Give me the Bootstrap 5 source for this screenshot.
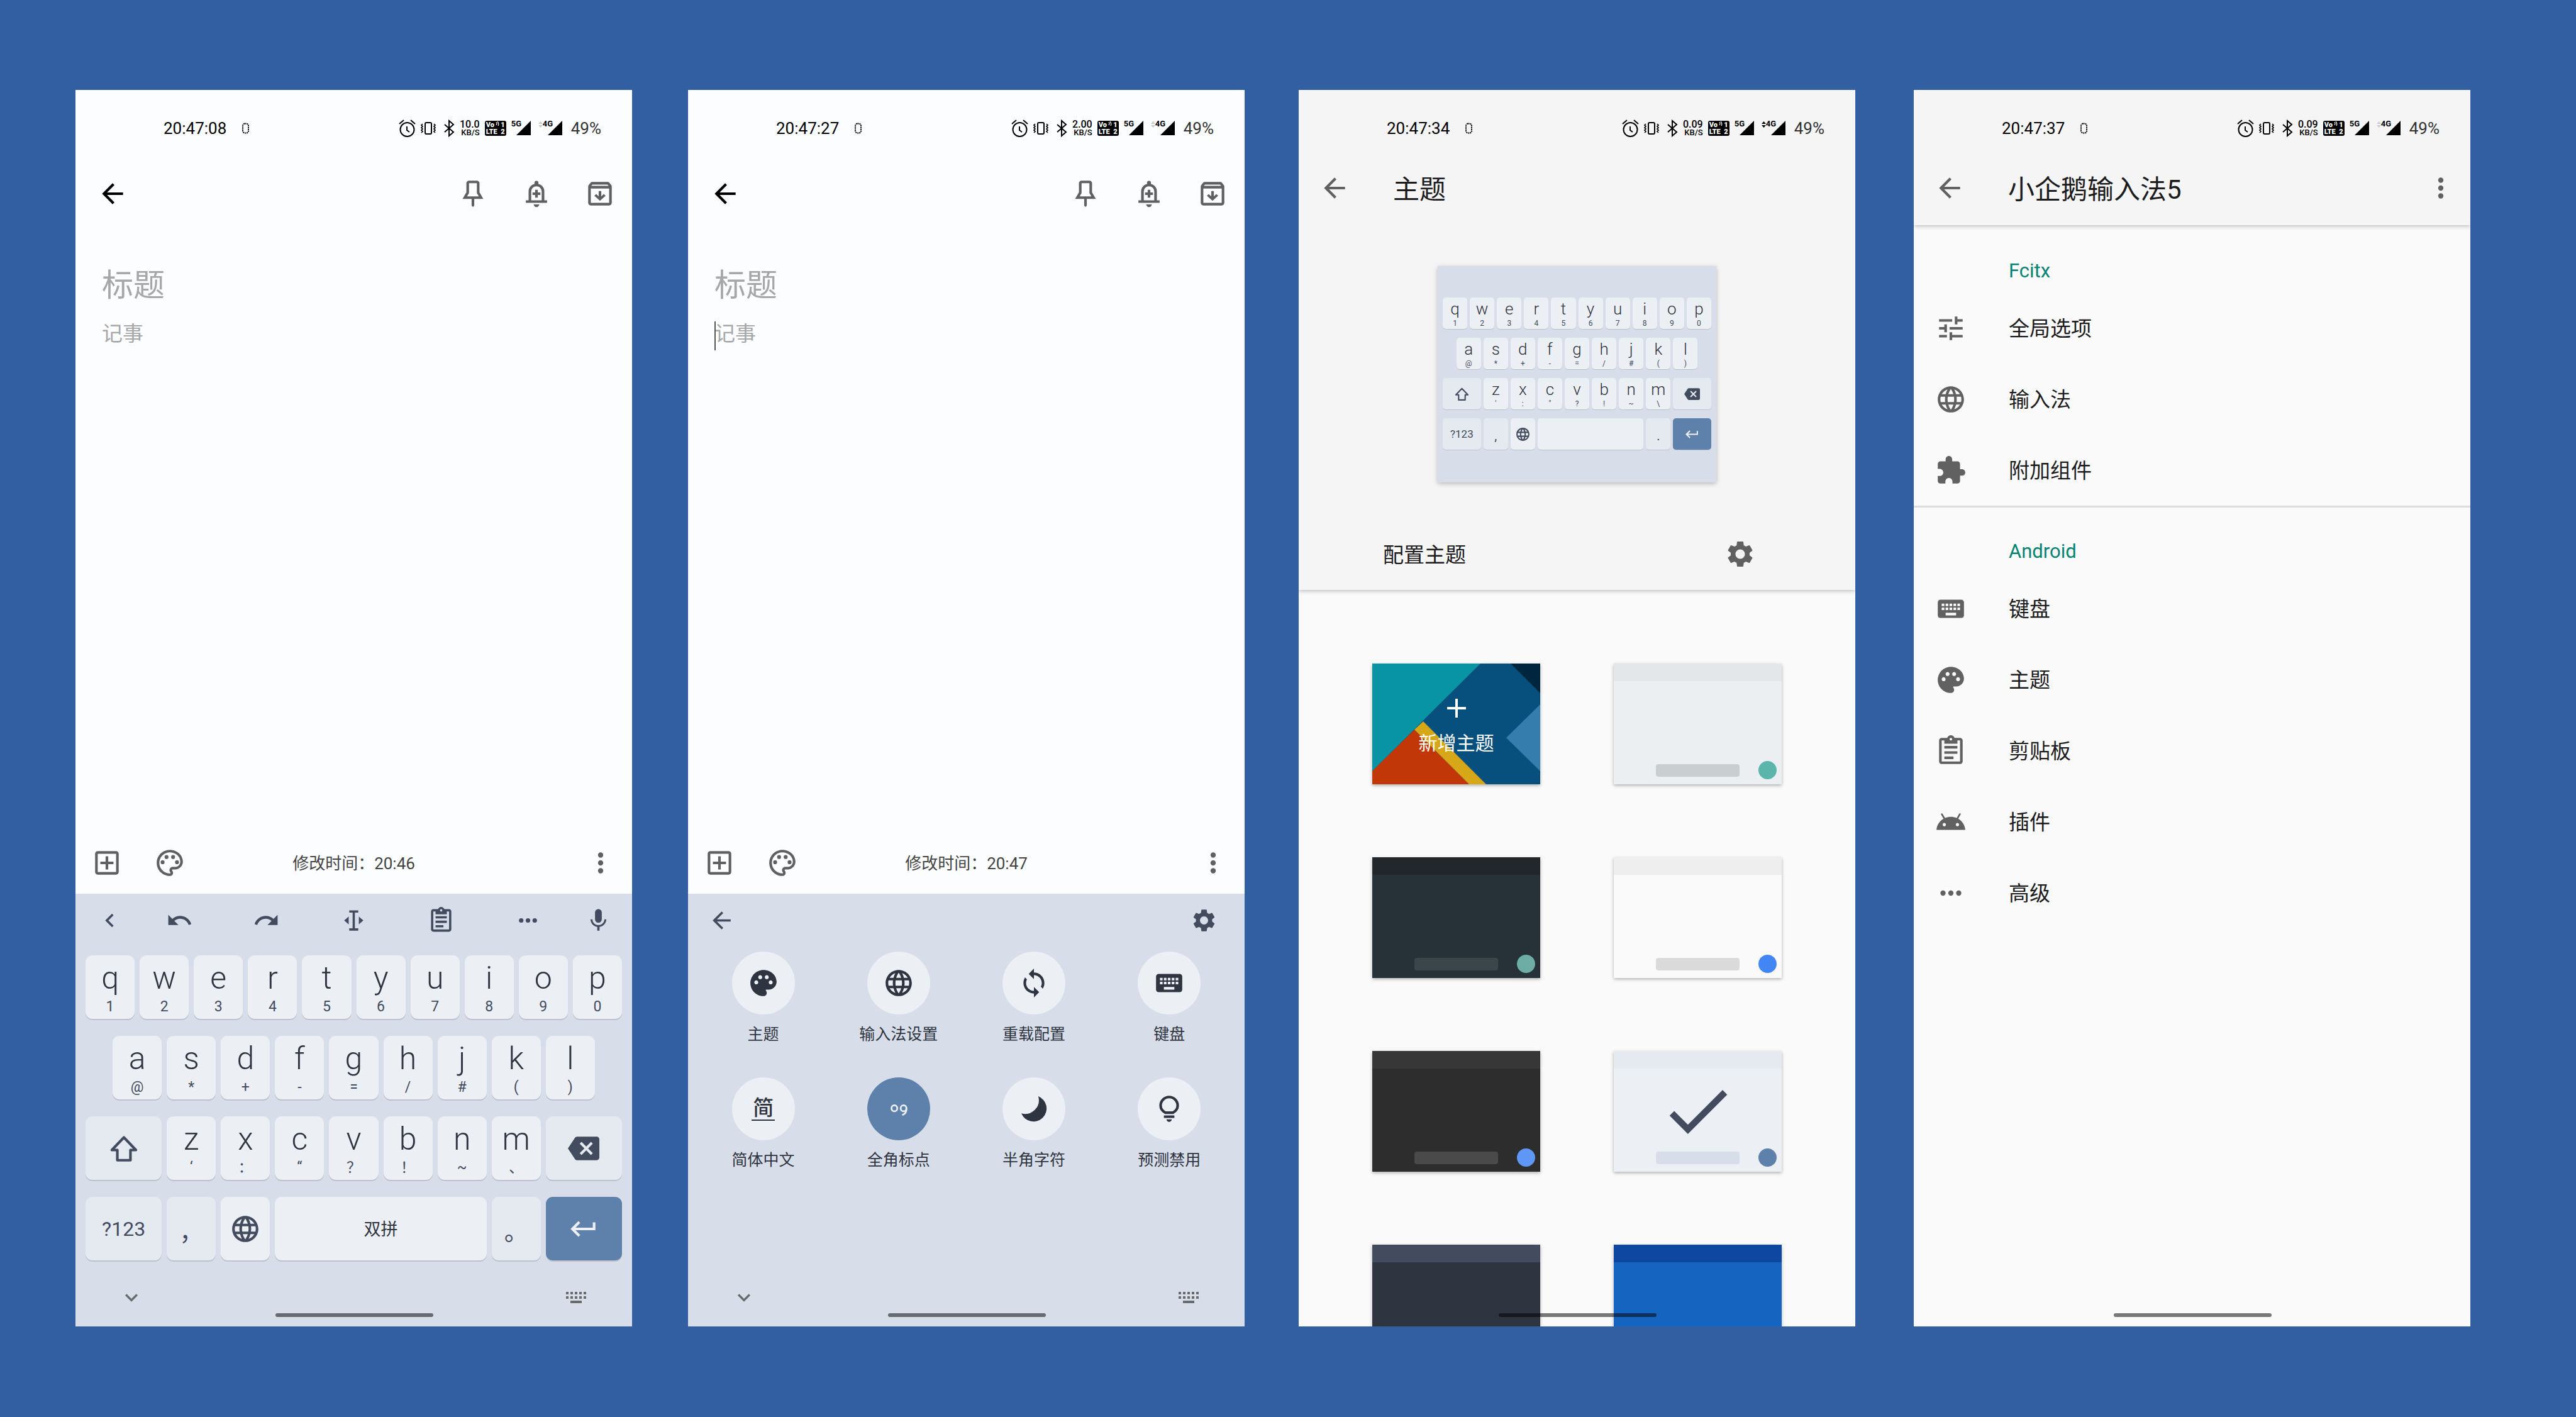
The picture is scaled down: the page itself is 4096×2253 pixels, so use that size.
<!DOCTYPE html>
<html lang="zh-CN">
<head>
<meta charset="utf-8">
<meta name="viewport" content="width=device-width, initial-scale=1">
<title>小企鹅输入法5</title>
<link href="https://cdn.jsdelivr.net/npm/bootstrap@5.3.0/dist/css/bootstrap.min.css" rel="stylesheet">
<style>
:root{--ink:#1c1c1e;--grey:#616161;--kb-bg:#d8dee9;--kb-key:#eceff4;--kb-alt:#e5e9f0;--kb-ink:#2e3440;--kb-sub:#434c5e;--kb-accent:#5e81ac}
body{background:#315fa2;font-family:Roboto,"Noto Sans CJK SC",sans-serif;color:var(--ink)}
svg{display:block;fill:currentColor;flex:none}
.btn{--bs-btn-padding-x:0;--bs-btn-padding-y:0;--bs-btn-border-width:0;--bs-btn-color:inherit;color:inherit;border-radius:0}
.i40{width:40px;height:40px}
.i43{width:43px;height:43px}
.i50{width:50px;height:50px}
/* stage with four phone screens */
.stage{height:100vh;padding:143px 168px 144px 120px}
.screen{flex:1 1 0;min-width:0;background:#fcfdff;overflow:hidden}
.gap-s{margin-left:86px}.gap-m{margin-left:89px}.gap-l{margin-left:93px}
.homebar{position:absolute;left:50%;bottom:15px;width:251px;height:6px;margin-left:-125px;border-radius:3px;background:rgba(0,0,0,.52)}
/* status bar */
.status{height:97px;padding:24px 49px 0 140px;font-size:26px;line-height:30px;color:#000}
.clockdot{margin-left:24px}
.stat-icons{gap:8px}
.rate{width:32px;font-weight:500;font-size:16px;line-height:13px;text-align:right}
.rate span{display:block;font-size:13px}
.volte{width:34px;height:24px;border-radius:3px;background:#000;color:#fff;font-weight:900;font-size:11px;line-height:11px;padding:1px 2px}
.sig{height:24px;font-weight:700;font-size:13px;line-height:10px}
.sig .tri{margin-left:-8px}
.sig5{width:35px}.sig4{width:44px}
.pct{color:#333}
/* note editor */
.note-top{height:136px;padding:0 26px 0 34px;color:#5f6062}
.note-top .actions{gap:51px}
.note-main{padding:48px 42px 0}
.plain{border:0;background:none;outline:0;padding:0;width:100%;resize:none;display:block;border-radius:0}
.plain::placeholder{color:#a6a7a9;opacity:1}
.note-title{font-size:50px;line-height:60px;height:60px}
.note-text{font-size:33px;line-height:40px;overflow:hidden}
.note-body{margin-top:27px}
.caret{position:absolute;left:0;top:0;width:2px;height:46px;background:#555}
.note-foot{height:99px;padding:0 25px;color:#5f6062}
.note-foot .actions{gap:50px}
.stamp{font-size:26px;color:#444;padding-top:3px}
/* keyboard */
.kb{background:var(--kb-bg);color:var(--kb-sub)}
.kb-bar{height:84px;padding:0 12px}
.kb-bar .side{width:84px;flex:none}
.kb-bar .btn{display:flex;justify-content:center}
.kb-rows{padding:0 12px;--fs:50px;--lh:52px;--pt:10px;--sfs:23px;--slh:24px;--smt:8px;--h:101px;--mx:4px;--mt:14px;--mb:13px;--r:11px;--sh:2px;--fn:32px;--pn:38px;--ic:50px}
.kb-key{flex:0 0 calc(10% - 2*var(--mx));margin:var(--mt) var(--mx) var(--mb);height:var(--h);background:var(--kb-key);border-radius:var(--r);box-shadow:0 var(--sh) 0 #bdc3ce;color:var(--kb-ink);font-size:var(--fs);font-weight:300;line-height:var(--lh);padding:var(--pt) 0 0;display:flex;flex-direction:column;align-items:center}
.kb-key span{font-size:var(--sfs);font-weight:400;line-height:var(--slh);margin-top:var(--smt);color:var(--kb-sub)}
.kb-key svg{width:var(--ic);height:var(--ic)}
.k-c{justify-content:center;padding:0;font-weight:400;color:var(--kb-sub)}
.k-wide{flex-basis:calc(15% - 2*var(--mx))}
.k-space{flex-basis:calc(40% - 2*var(--mx));font-size:27px;color:var(--kb-ink);padding-top:3px}
.k-alt{background:var(--kb-alt)}
.k-fn{font-size:var(--fn)}
.k-pn{font-size:var(--pn);padding-top:var(--pt)}
.k-go,.k-go:hover{background:var(--kb-accent);color:#eceff4}
.kb-nav{height:92px;padding:0 69px;color:#686a6c}
/* tool panel */
.panel-bar{height:84px;padding:0 43px 0 32px}
.panel{min-height:512px;padding:8px 12px 0;color:var(--kb-ink)}
.tool{height:200px;font-size:25px;line-height:36px;display:flex;flex-direction:column;align-items:center;justify-content:flex-start}
.disc{width:100px;height:100px;border-radius:50%;background:var(--kb-key);margin-bottom:14px;display:flex;align-items:center;justify-content:center}
.disc-on{background:var(--kb-accent);color:#eceff4}
.jian{font-size:33px;line-height:36px;font-weight:500;border-bottom:2px solid;padding:0 2px}
/* settings screens */
.appbar{background:#f5f5f5;position:relative;z-index:1;box-shadow:0 1px 7px rgba(0,0,0,.3)}
.appbar-row{height:118px;padding:0 22px 0 32px;color:var(--grey)}
.app-title{font-size:42px;line-height:60px;font-weight:400;color:var(--ink);padding-top:5px;margin:0 auto 0 68px}
.flat{background:#fafafa}
.preview{width:443px;height:344px;margin:65px auto 0;padding-top:43px;background:var(--kb-bg);box-shadow:0 2px 7px rgba(0,0,0,.25)}
.preview .kb-rows{padding:0 6px;--fs:26px;--lh:26px;--pt:5px;--sfs:12px;--slh:12px;--smt:4px;--h:50px;--mx:2px;--mt:7px;--mb:7px;--r:5px;--sh:1px;--fn:17px;--pn:20px;--ic:25px}
.config{height:114px;margin-top:57px;padding:0 158px 0 134px;font-size:33px}
.config span,.pref span{padding-top:3px}
.themes{flex:1 1 0;min-height:0;overflow:hidden;display:grid;grid-template-columns:267px 267px;justify-content:space-evenly;align-content:start;row-gap:116px;padding-top:117px}
.theme{position:relative;height:192px;display:flex;flex-direction:column;background:var(--b);box-shadow:0 2px 5px rgba(0,0,0,.3)}
.theme i{display:block}
.t-head{height:28px;width:100%;background:var(--h)}
.t-foot{margin-top:auto;width:100%;padding:0 8px 8px 37px}
.t-bar{width:133px;height:20px;border-radius:4px;background:var(--s);margin-left:30px}
.t-dot{width:29px;height:29px;border-radius:50%;background:var(--a)}
.tick{position:absolute;left:71px;top:33px;width:125px;height:125px;color:#434c5e}
.art{position:absolute;left:0;top:0;width:100%;height:100%}
.new{position:relative;color:#fff;font-size:30px;line-height:40px;padding-top:56px;width:100%}
.new svg{margin:0 auto 21px}
.th-aqua{--h:#e3e7e9;--b:#ebeff1;--s:#c9ced1;--a:#5bb5aa}
.th-deep{--h:#21272b;--b:#263238;--s:#3b464b;--a:#6eada6}
.th-light{--h:#eee;--b:#fafafa;--s:#dadada;--a:#4285f4}
.th-dark{--h:#373737;--b:#2d2d2d;--s:#4a4a4a;--a:#5e97f6}
.th-nord{--h:#e5e9f0;--b:#eceff4;--s:#d8dee9;--a:#5e81ac}
.th-nordk{--h:#434c5e;--b:#2e3440;--s:#4c566a;--a:#5e81ac}
.th-blue{--h:#0d47a1;--b:#1565c0;--s:#3f7fd0;--a:#90caf9}
.prefs{padding-top:3px}
.group{height:104px;padding:50px 0 0 151px;font-size:31px;line-height:40px;color:#078373;margin:0;font-weight:400}
.pref{height:113px;padding-left:34px;gap:67px;font-size:33px;color:var(--grey);text-decoration:none}
.pref span{color:var(--ink)}
.rule{height:3px;background:#dcdcdc}
</style>
<script src="https://cdn.jsdelivr.net/npm/bootstrap@5.3.0/dist/js/bootstrap.bundle.min.js"></script>
</head>
<body>
<svg width="0" height="0" class="position-absolute" aria-hidden="true"><defs>
<symbol id="back" viewBox="0 0 24 24"><path d="M20 11H7.83l5.59-5.59L12 4l-8 8 8 8 1.41-1.41L7.83 13H20v-2z"/></symbol>
<symbol id="pin" viewBox="0 0 24 24"><path d="M9 3h6a1 1 0 0 1 1 1v7.2l2.2 3.8H5.8L8 11.200V4a1 1 0 0 1 1-1z" fill="none" stroke="currentColor" stroke-width="2"/><path d="M11 15.500h2v5.600l-1 1-1-1z"/></symbol>
<symbol id="bell" viewBox="0 0 24 24"><path d="M7 17.500V10.300a5 5 0 0 1 10 0v7.200" fill="none" stroke="currentColor" stroke-width="2"/><rect x="10.500" y="2.200" width="3" height="3.500" rx="1.500"/><path d="M3.900 17h16.200v2H3.900zM9.900 20.200h4.200a2.100 2 0 0 1-4.200 0zM11 9h2v2h2v2h-2v2h-2v-2H9v-2h2z"/></symbol>
<symbol id="archive" viewBox="0 0 24 24"><path fill-rule="evenodd" d="M20.540 5.230l-1.390-1.680C18.880 3.210 18.470 3 18 3H6c-.47 0-.88.21-1.160.55L3.460 5.230C3.170 5.570 3 6.020 3 6.500V19c0 1.100.9 2 2 2h14c1.100 0 2-.9 2-2V6.500c0-.48-.17-.93-.46-1.270zM6.240 5h11.520l.83 1H5.420l.82-1zM5 19V8h14v11H5z"/><path d="M12 17.400L7.700 13.500 9.100 12.200 11 14V10h2v4l1.900-1.800 1.400 1.300z"/></symbol>
<symbol id="addbox" viewBox="0 0 24 24"><path d="M19 3H5c-1.110 0-2 .9-2 2v14c0 1.100.89 2 2 2h14c1.100 0 2-.9 2-2V5c0-1.100-.9-2-2-2zm0 16H5V5h14v14zm-8-2h2v-4h4v-2h-4V7h-2v4H7v2h4z"/></symbol>
<symbol id="palo" viewBox="0 0 24 24"><path d="M12 22C6.490 22 2 17.510 2 12S6.490 2 12 2s10 4.040 10 9c0 3.310-2.690 6-6 6h-1.770c-.28 0-.5.22-.5.5 0 .12.05.23.13.33.41.47.64 1.060.64 1.670 0 1.380-1.120 2.500-2.500 2.500zm0-18c-4.410 0-8 3.590-8 8s3.590 8 8 8c.28 0 .5-.22.5-.5 0-.16-.08-.28-.14-.35-.41-.46-.63-1.050-.63-1.650 0-1.380 1.120-2.500 2.500-2.500H16c2.210 0 4-1.790 4-4 0-3.860-3.590-7-8-7z"/><circle cx="6.500" cy="11.500" r="1.500"/><circle cx="9.500" cy="7.500" r="1.500"/><circle cx="14.500" cy="7.500" r="1.500"/><circle cx="17.500" cy="11.500" r="1.500"/></symbol>
<symbol id="pal" viewBox="0 0 24 24"><path d="M12 2C6.490 2 2 6.490 2 12s4.490 10 10 10c1.380 0 2.500-1.120 2.500-2.500 0-.61-.23-1.200-.64-1.670-.08-.1-.13-.21-.13-.33 0-.28.22-.5.5-.5H16c3.310 0 6-2.690 6-6 0-4.960-4.490-9-10-9zm5.500 11c-.83 0-1.500-.67-1.500-1.500s.67-1.500 1.500-1.500 1.500.67 1.500 1.500-.67 1.500-1.500 1.500zm-3-4c-.83 0-1.500-.67-1.500-1.500S13.670 6 14.500 6s1.500.67 1.500 1.500S15.330 9 14.500 9zM5 11.500c0-.83.67-1.500 1.500-1.500s1.500.67 1.500 1.500S7.330 13 6.500 13 5 12.330 5 11.500zm6-4c0 .83-.67 1.500-1.500 1.500S8 8.330 8 7.500 8.670 6 9.500 6s1.500.67 1.500 1.500z"/></symbol>
<symbol id="vdots" viewBox="0 0 24 24"><circle cx="12" cy="6" r="2"/><circle cx="12" cy="12" r="2"/><circle cx="12" cy="18" r="2"/></symbol>
<symbol id="hdots" viewBox="0 0 24 24"><circle cx="6" cy="12" r="2"/><circle cx="12" cy="12" r="2"/><circle cx="18" cy="12" r="2"/></symbol>
<symbol id="chevl" viewBox="0 0 24 24"><path d="M15.410 7.410L14 6l-6 6 6 6 1.410-1.410L10.830 12z"/></symbol>
<symbol id="chevd" viewBox="0 0 24 24"><path d="M16.590 8.590L12 13.170 7.410 8.590 6 10l6 6 6-6z"/></symbol>
<symbol id="undo" viewBox="0 0 24 24"><path d="M12.500 8c-2.650 0-5.050.99-6.900 2.600L2 7v9h9l-3.620-3.620c1.390-1.160 3.160-1.880 5.120-1.880 3.540 0 6.550 2.310 7.600 5.500l2.370-.78C21.080 11.030 17.150 8 12.500 8z"/></symbol>
<symbol id="redo" viewBox="0 0 24 24"><path d="M18.400 10.600C16.550 8.990 14.150 8 11.500 8c-4.650 0-8.580 3.030-9.960 7.220L3.900 16c1.050-3.190 4.050-5.500 7.600-5.500 1.950 0 3.730.72 5.120 1.880L13 16h9V7l-3.600 3.600z"/></symbol>
<symbol id="ibeam" viewBox="0 0 24 24"><path d="M8 3h8v2h-3v14h3v2H8v-2h3V5H8zM7.500 8.500v7L3.500 12zM16.500 8.500v7l4-3.500z"/></symbol>
<symbol id="clip" viewBox="0 0 24 24"><path d="M19 2h-4.180C14.400.84 13.300 0 12 0c-1.300 0-2.400.84-2.820 2H5c-1.100 0-2 .9-2 2v16c0 1.100.9 2 2 2h14c1.100 0 2-.9 2-2V4c0-1.100-.9-2-2-2zm-7 0c.55 0 1 .45 1 1s-.45 1-1 1-1-.45-1-1 .45-1 1-1zm7 18H5V4h2v2.500h10V4h2v16z"/><path d="M7 8.200h10v2H7zM7 12.200h10v2H7zM7 16.200h7v2H7z"/></symbol>
<symbol id="mic" viewBox="0 0 24 24"><path d="M12 14c1.660 0 2.990-1.340 2.990-3L15 5c0-1.660-1.340-3-3-3S9 3.340 9 5v6c0 1.660 1.340 3 3 3zm5.300-3c0 3-2.540 5.100-5.300 5.100S6.700 14 6.700 11H5c0 3.410 2.720 6.230 6 6.720V21h2v-3.280c3.280-.48 6-3.300 6-6.720h-1.700z"/></symbol>
<symbol id="gear" viewBox="0 0 24 24"><path d="M19.140 12.940c.04-.3.06-.61.06-.94 0-.32-.02-.64-.07-.94l2.030-1.580c.18-.14.23-.41.12-.61l-1.920-3.320c-.12-.22-.37-.29-.59-.22l-2.390.96c-.5-.38-1.030-.7-1.620-.94l-.36-2.540c-.04-.24-.24-.41-.48-.41h-3.840c-.24 0-.43.17-.47.41l-.36 2.540c-.59.24-1.130.57-1.620.94l-2.390-.96c-.22-.08-.47 0-.59.22L2.740 8.870c-.12.21-.08.47.12.61l2.030 1.580c-.05.3-.09.63-.09.94s.02.64.07.94l-2.030 1.580c-.18.14-.23.41-.12.61l1.920 3.320c.12.22.37.29.59.22l2.390-.96c.5.38 1.030.7 1.620.94l.36 2.540c.05.24.24.41.48.41h3.840c.24 0 .44-.17.47-.41l.36-2.540c.59-.24 1.130-.56 1.620-.94l2.390.96c.22.08.47 0 .59-.22l1.920-3.320c.12-.22.07-.47-.12-.61l-2.010-1.580zM12 15.600c-1.980 0-3.600-1.620-3.600-3.600s1.620-3.600 3.600-3.600 3.600 1.620 3.600 3.600-1.620 3.600-3.600 3.600z"/></symbol>
<symbol id="globe" viewBox="0 0 24 24"><path d="M11.990 2C6.470 2 2 6.480 2 12s4.470 10 9.990 10C17.520 22 22 17.520 22 12S17.520 2 11.990 2zm6.930 6h-2.950c-.32-1.250-.78-2.450-1.380-3.560 1.840.63 3.370 1.910 4.330 3.560zM12 4.040c.83 1.200 1.480 2.530 1.910 3.960h-3.820c.43-1.430 1.080-2.760 1.910-3.960zM4.260 14C4.100 13.360 4 12.690 4 12s.1-1.360.26-2h3.380c-.08.66-.14 1.320-.14 2 0 .68.06 1.340.14 2H4.260zm.82 2h2.950c.32 1.250.78 2.450 1.380 3.560-1.840-.63-3.370-1.900-4.330-3.560zm2.950-8H5.080c.96-1.660 2.490-2.930 4.330-3.560C8.810 5.550 8.350 6.750 8.030 8zM12 19.960c-.83-1.200-1.480-2.530-1.910-3.960h3.820c-.43 1.430-1.080 2.760-1.910 3.960zM14.340 14H9.660c-.09-.66-.16-1.320-.16-2 0-.68.07-1.350.16-2h4.680c.09.65.16 1.320.16 2 0 .68-.07 1.340-.16 2zm.25 5.560c.6-1.110 1.060-2.310 1.380-3.560h2.950c-.96 1.650-2.490 2.930-4.330 3.560zM16.360 14c.08-.66.14-1.320.14-2 0-.68-.06-1.340-.14-2h3.380c.16.64.26 1.310.26 2s-.1 1.360-.26 2h-3.380z"/></symbol>
<symbol id="keyb" viewBox="0 0 24 24"><path d="M20 5H4c-1.100 0-1.990.9-1.990 2L2 17c0 1.100.9 2 2 2h16c1.100 0 2-.9 2-2V7c0-1.100-.9-2-2-2zm-9 3h2v2h-2V8zm0 3h2v2h-2v-2zM8 8h2v2H8V8zm0 3h2v2H8v-2zm-1 2H5v-2h2v2zm0-3H5V8h2v2zm9 7H8v-2h8v2zm0-4h-2v-2h2v2zm0-3h-2V8h2v2zm3 3h-2v-2h2v2zm0-3h-2V8h2v2z"/></symbol>
<symbol id="sync" viewBox="0 0 24 24"><path d="M12 4V1L8 5l4 4V6c3.310 0 6 2.690 6 6 0 1.010-.25 1.970-.7 2.800l1.460 1.460C19.540 15.030 20 13.570 20 12c0-4.420-3.580-8-8-8zm0 14c-3.310 0-6-2.690-6-6 0-1.010.25-1.970.7-2.800L5.240 7.740C4.460 8.970 4 10.430 4 12c0 4.420 3.580 8 8 8v3l4-4-4-4v3z"/></symbol>
<symbol id="moon" viewBox="0 0 24 24"><path d="M15.300 2.400A10 10 0 1 1 2.400 15.500A10.500 10.500 0 0 0 15.300 2.400z"/></symbol>
<symbol id="bulb" viewBox="0 0 24 24"><path d="M9 14.900C7 13.800 5.500 11.900 5.500 9.500a6.500 6.500 0 0 1 13 0c0 2.400-1.500 4.300-3.500 5.400z" fill="none" stroke="currentColor" stroke-width="2"/><path d="M8 17h8v2H8zM10 20h4a2 2 0 0 1-4 0z"/></symbol>
<symbol id="punct" viewBox="0 0 24 24"><g fill="none" stroke="currentColor" stroke-width="1.300"><ellipse cx="8.700" cy="11.600" rx="2.200" ry="2.300"/><ellipse cx="15.700" cy="11.600" rx="2.200" ry="2.300"/><path d="M17.900 11.500c.2 2.600-.8 4.500-3.200 5.300"/></g></symbol>
<symbol id="shift" viewBox="0 0 24 24"><path d="M12 3.600L2.800 13.200H7V21h10v-7.800h4.200z" fill="none" stroke="currentColor" stroke-width="2" stroke-linejoin="round"/></symbol>
<symbol id="bksp" viewBox="0 0 24 24"><path d="M22 3H7c-.69 0-1.230.35-1.590.88L0 12l5.410 8.110c.36.53.9.89 1.590.89h15c1.100 0 2-.9 2-2V5c0-1.100-.9-2-2-2zm-3 12.590L17.590 17 14 13.410 10.410 17 9 15.590 12.590 12 9 8.410 10.410 7 14 10.590 17.590 7 19 8.410 15.410 12 19 15.590z"/></symbol>
<symbol id="enter" viewBox="0 0 24 24"><path d="M19 7v4H5.830l3.580-3.590L8 6l-6 6 6 6 1.410-1.410L5.830 13H21V7z"/></symbol>
<symbol id="tune" viewBox="0 0 24 24"><path d="M3 17v2h6v-2H3zM3 5v2h10V5H3zm10 16v-2h8v-2h-8v-2h-2v6h2zM7 9v2H3v2h4v2h2V9H7zm14 4v-2H11v2h10zm-6-4h2V7h4V5h-4V3h-2v6z"/></symbol>
<symbol id="ext" viewBox="0 0 24 24"><path d="M20.500 11H19V7c0-1.100-.9-2-2-2h-4V3.500C13 2.120 11.880 1 10.500 1S8 2.120 8 3.500V5H4c-1.100 0-1.990.9-1.990 2v3.800H3.500c1.490 0 2.700 1.210 2.700 2.700s-1.210 2.700-2.700 2.700H2V20c0 1.100.9 2 2 2h3.800v-1.500c0-1.490 1.210-2.700 2.700-2.700 1.490 0 2.700 1.210 2.700 2.700V22H17c1.100 0 2-.9 2-2v-4h1.500c1.380 0 2.500-1.120 2.500-2.500S21.880 11 20.500 11z"/></symbol>
<symbol id="droid" viewBox="0 0 24 24"><path d="M17.600 9.480l1.840-3.180c.16-.31.04-.69-.26-.85-.29-.15-.65-.06-.83.22l-1.880 3.240c-2.860-1.210-6.080-1.210-8.940 0L5.650 5.670c-.19-.29-.58-.38-.87-.2-.28.18-.37.54-.22.83L6.400 9.480C3.300 11.250 1.280 14.440 1 18h22c-.28-3.560-2.300-6.750-5.400-8.520zM7 15.250c-.69 0-1.250-.56-1.250-1.250S6.310 12.750 7 12.750 8.250 13.310 8.250 14 7.690 15.250 7 15.250zm10 0c-.69 0-1.250-.56-1.250-1.250s.56-1.250 1.250-1.250 1.250.56 1.250 1.250-.56 1.250-1.250 1.250z"/></symbol>
<symbol id="zero" viewBox="0 0 14 18"><rect x="2" y="1.500" width="9" height="15" rx="3.500" fill="none" stroke="currentColor" stroke-width="2" stroke-dasharray="2 1"/></symbol>
<symbol id="alarm" viewBox="0 0 27 28"><g fill="none" stroke="currentColor" stroke-width="2"><circle cx="13.500" cy="16" r="11"/><path d="M1 7l7-6M26 7l-7-6M13 11v6l4 3"/></g></symbol>
<symbol id="vib" viewBox="0 0 24 28"><g fill="none" stroke="currentColor"><rect x="7" y="5" width="10" height="18" rx="2" stroke-width="2"/><path stroke-width="1.700" d="M3 7l-2 2 2 2-2 2 2 2-2 2 2 2-2 2M21 7l2 2-2 2 2 2-2 2 2 2-2 2 2 2"/></g></symbol>
<symbol id="bt" viewBox="0 0 22 28"><path d="M6 8l14 12-7 6V2l7 6L6 20" fill="none" stroke="currentColor" stroke-width="2"/></symbol>
<symbol id="tri" viewBox="0 0 23 23"><path d="M23 0v23H0z"/></symbol>
<symbol id="updn" viewBox="0 0 7 12"><path d="M3.500 1L7 5H0zM3.500 11L7 7H0z"/></symbol>
<symbol id="wave" viewBox="0 0 6 8"><path d="M1 1q2 2.500 0 5M3 0q3 3.500 1 7" fill="none" stroke="currentColor" stroke-width="1.200"/></symbol>
<symbol id="kgrid" viewBox="0 0 40 40"><path d="M4 11h4v4H4zM11 11h4v4h-4zM18 11h4v4h-4zM25 11h4v4h-4zM32 11h4v4h-4zM4 18h4v4H4zM11 18h4v4h-4zM18 18h4v4h-4zM25 18h4v4h-4zM32 18h4v4h-4zM11 25h18v4H11z"/></symbol>
</defs></svg>

<main class="stage d-flex align-items-stretch">

<!-- note editor with keyboard -->
<section class="screen position-relative d-flex flex-column">
  <div class="status d-flex align-items-center"><span>20:47:08</span><svg class="clockdot" width="14" height="18"><use href="#zero"/></svg>
    <div class="stat-icons d-flex align-items-center ms-auto"><svg width="27" height="28"><use href="#alarm"/></svg><svg width="24" height="28"><use href="#vib"/></svg><svg width="22" height="28"><use href="#bt"/></svg><div class="rate">10.0<span>KB/S</span></div>
    <div class="volte"><div class="d-flex justify-content-between"><span>Vo</span><svg width="6" height="8"><use href="#wave"/></svg><span>1</span></div><div class="d-flex justify-content-between"><span>LTE</span><span>2</span></div></div>
    <div class="sig sig5 d-flex">5G<svg class="tri" width="23" height="23"><use href="#tri"/></svg></div><div class="sig sig4 d-flex"><svg width="7" height="12" color="#ccc"><use href="#updn"/></svg>4G<svg class="tri" width="23" height="23"><use href="#tri"/></svg></div><span class="pct">49%</span></div></div>
  <nav class="note-top d-flex align-items-center justify-content-between"><button class="btn text-black" aria-label="返回"><svg class="i50"><use href="#back"/></svg></button>
    <div class="actions d-flex"><button class="btn" aria-label="固定"><svg class="i50"><use href="#pin"/></svg></button><button class="btn" aria-label="提醒"><svg class="i50"><use href="#bell"/></svg></button><button class="btn" aria-label="归档"><svg class="i50"><use href="#archive"/></svg></button></div></nav>
  <div class="note-main flex-grow-1"><input class="plain note-title" type="text" aria-label="标题" placeholder="标题"><div class="note-body position-relative"><textarea class="plain note-text" rows="4" aria-label="记事" placeholder="记事"></textarea></div></div>
  <div class="note-foot d-flex align-items-center justify-content-between position-relative"><div class="actions d-flex"><button class="btn" aria-label="添加"><svg class="i50"><use href="#addbox"/></svg></button><button class="btn" aria-label="背景"><svg class="i50"><use href="#palo"/></svg></button></div><span class="stamp position-absolute start-50 translate-middle-x">修改时间：20:46</span><button class="btn" aria-label="更多"><svg class="i50"><use href="#vdots"/></svg></button></div>
  <div class="kb">
    <div class="kb-bar d-flex align-items-center"><button class="btn side" aria-label="收起"><svg class="i43"><use href="#chevl"/></svg></button><div class="d-flex justify-content-around flex-grow-1"><button class="btn" aria-label="撤销"><svg class="i43"><use href="#undo"/></svg></button><button class="btn" aria-label="重做"><svg class="i43"><use href="#redo"/></svg></button><button class="btn" aria-label="光标"><svg class="i43"><use href="#ibeam"/></svg></button><button class="btn" aria-label="剪贴板"><svg class="i43"><use href="#clip"/></svg></button><button class="btn" aria-label="更多"><svg class="i43"><use href="#hdots"/></svg></button></div><button class="btn side" aria-label="语音"><svg class="i43"><use href="#mic"/></svg></button></div>
    <div class="kb-rows">
      <div class="d-flex justify-content-center"><button class="btn kb-key">q<span>1</span></button><button class="btn kb-key">w<span>2</span></button><button class="btn kb-key">e<span>3</span></button><button class="btn kb-key">r<span>4</span></button><button class="btn kb-key">t<span>5</span></button><button class="btn kb-key">y<span>6</span></button><button class="btn kb-key">u<span>7</span></button><button class="btn kb-key">i<span>8</span></button><button class="btn kb-key">o<span>9</span></button><button class="btn kb-key">p<span>0</span></button></div>
      <div class="d-flex justify-content-center"><button class="btn kb-key">a<span>@</span></button><button class="btn kb-key">s<span>*</span></button><button class="btn kb-key">d<span>+</span></button><button class="btn kb-key">f<span>-</span></button><button class="btn kb-key">g<span>=</span></button><button class="btn kb-key">h<span>/</span></button><button class="btn kb-key">j<span>#</span></button><button class="btn kb-key">k<span>(</span></button><button class="btn kb-key">l<span>)</span></button></div>
      <div class="d-flex justify-content-center"><button class="btn kb-key k-c k-wide k-alt" aria-label="Shift"><svg><use href="#shift"/></svg></button><button class="btn kb-key">z<span>‘</span></button><button class="btn kb-key">x<span>：</span></button><button class="btn kb-key">c<span>“</span></button><button class="btn kb-key">v<span>？</span></button><button class="btn kb-key">b<span>！</span></button><button class="btn kb-key">n<span>~</span></button><button class="btn kb-key">m<span>、</span></button><button class="btn kb-key k-c k-wide k-alt" aria-label="退格"><svg><use href="#bksp"/></svg></button></div>
      <div class="d-flex justify-content-center"><button class="btn kb-key k-c k-wide k-alt k-fn">?123</button><button class="btn kb-key k-c k-alt k-pn">，</button><button class="btn kb-key k-c" aria-label="切换"><svg><use href="#globe"/></svg></button><button class="btn kb-key k-c k-space">双拼</button><button class="btn kb-key k-c k-alt k-pn">。</button><button class="btn kb-key k-c k-wide k-go" aria-label="回车"><svg><use href="#enter"/></svg></button></div>
    </div>
    <div class="kb-nav d-flex align-items-center justify-content-between"><button class="btn" aria-label="隐藏键盘"><svg class="i40"><use href="#chevd"/></svg></button><button class="btn" aria-label="选择输入法"><svg class="i40"><use href="#kgrid"/></svg></button></div>
  </div>
  <div class="homebar"></div>
</section>

<!-- note editor with tool panel -->
<section class="screen gap-m position-relative d-flex flex-column">
  <div class="status d-flex align-items-center"><span>20:47:27</span><svg class="clockdot" width="14" height="18"><use href="#zero"/></svg>
    <div class="stat-icons d-flex align-items-center ms-auto"><svg width="27" height="28"><use href="#alarm"/></svg><svg width="24" height="28"><use href="#vib"/></svg><svg width="22" height="28"><use href="#bt"/></svg><div class="rate">2.00<span>KB/S</span></div>
    <div class="volte"><div class="d-flex justify-content-between"><span>Vo</span><svg width="6" height="8"><use href="#wave"/></svg><span>1</span></div><div class="d-flex justify-content-between"><span>LTE</span><span>2</span></div></div>
    <div class="sig sig5 d-flex">5G<svg class="tri" width="23" height="23"><use href="#tri"/></svg></div><div class="sig sig4 d-flex"><svg width="7" height="12" color="#ccc"><use href="#updn"/></svg>4G<svg class="tri" width="23" height="23"><use href="#tri"/></svg></div><span class="pct">49%</span></div></div>
  <nav class="note-top d-flex align-items-center justify-content-between"><button class="btn text-black" aria-label="返回"><svg class="i50"><use href="#back"/></svg></button>
    <div class="actions d-flex"><button class="btn" aria-label="固定"><svg class="i50"><use href="#pin"/></svg></button><button class="btn" aria-label="提醒"><svg class="i50"><use href="#bell"/></svg></button><button class="btn" aria-label="归档"><svg class="i50"><use href="#archive"/></svg></button></div></nav>
  <div class="note-main flex-grow-1"><input class="plain note-title" type="text" aria-label="标题" placeholder="标题"><div class="note-body position-relative"><textarea class="plain note-text" rows="4" aria-label="记事" placeholder="记事"></textarea><span class="caret"></span></div></div>
  <div class="note-foot d-flex align-items-center justify-content-between position-relative"><div class="actions d-flex"><button class="btn" aria-label="添加"><svg class="i50"><use href="#addbox"/></svg></button><button class="btn" aria-label="背景"><svg class="i50"><use href="#palo"/></svg></button></div><span class="stamp position-absolute start-50 translate-middle-x">修改时间：20:47</span><button class="btn" aria-label="更多"><svg class="i50"><use href="#vdots"/></svg></button></div>
  <div class="kb">
    <div class="panel-bar d-flex align-items-center justify-content-between"><button class="btn" aria-label="返回"><svg class="i43"><use href="#back"/></svg></button><button class="btn" aria-label="设置"><svg class="i43"><use href="#gear"/></svg></button></div>
    <div class="panel"><div class="row row-cols-4 g-0">
      <div class="col"><button class="btn tool w-100"><span class="disc"><svg class="i50"><use href="#pal"/></svg></span>主题</button></div>
      <div class="col"><button class="btn tool w-100"><span class="disc"><svg class="i50"><use href="#globe"/></svg></span>输入法设置</button></div>
      <div class="col"><button class="btn tool w-100"><span class="disc"><svg class="i50"><use href="#sync"/></svg></span>重载配置</button></div>
      <div class="col"><button class="btn tool w-100"><span class="disc"><svg class="i50"><use href="#keyb"/></svg></span>键盘</button></div>
      <div class="col"><button class="btn tool w-100"><span class="disc"><span class="jian">简</span></span>简体中文</button></div>
      <div class="col"><button class="btn tool w-100"><span class="disc disc-on"><svg class="i50"><use href="#punct"/></svg></span>全角标点</button></div>
      <div class="col"><button class="btn tool w-100"><span class="disc"><svg class="i50"><use href="#moon"/></svg></span>半角字符</button></div>
      <div class="col"><button class="btn tool w-100"><span class="disc"><svg class="i50"><use href="#bulb"/></svg></span>预测禁用</button></div>
    </div></div>
    <div class="kb-nav d-flex align-items-center justify-content-between"><button class="btn" aria-label="隐藏键盘"><svg class="i40"><use href="#chevd"/></svg></button><button class="btn" aria-label="选择输入法"><svg class="i40"><use href="#kgrid"/></svg></button></div>
  </div>
  <div class="homebar"></div>
</section>

<!-- theme picker -->
<section class="screen flat gap-s position-relative d-flex flex-column">
  <header class="appbar">
  <div class="status d-flex align-items-center"><span>20:47:34</span><svg class="clockdot" width="14" height="18"><use href="#zero"/></svg>
    <div class="stat-icons d-flex align-items-center ms-auto"><svg width="27" height="28"><use href="#alarm"/></svg><svg width="24" height="28"><use href="#vib"/></svg><svg width="22" height="28"><use href="#bt"/></svg><div class="rate">0.09<span>KB/S</span></div>
    <div class="volte"><div class="d-flex justify-content-between"><span>Vo</span><svg width="6" height="8"><use href="#wave"/></svg><span>1</span></div><div class="d-flex justify-content-between"><span>LTE</span><span>2</span></div></div>
    <div class="sig sig5 d-flex">5G<svg class="tri" width="23" height="23"><use href="#tri"/></svg></div><div class="sig sig4 d-flex"><svg width="7" height="12"><use href="#updn"/></svg>4G<svg class="tri" width="23" height="23"><use href="#tri"/></svg></div><span class="pct">49%</span></div></div>
  <div class="appbar-row d-flex align-items-center"><button class="btn" aria-label="返回"><svg class="i50"><use href="#back"/></svg></button><h1 class="app-title">主题</h1></div>
  <div class="preview"><div class="kb-rows">
      <div class="d-flex justify-content-center"><button class="btn kb-key">q<span>1</span></button><button class="btn kb-key">w<span>2</span></button><button class="btn kb-key">e<span>3</span></button><button class="btn kb-key">r<span>4</span></button><button class="btn kb-key">t<span>5</span></button><button class="btn kb-key">y<span>6</span></button><button class="btn kb-key">u<span>7</span></button><button class="btn kb-key">i<span>8</span></button><button class="btn kb-key">o<span>9</span></button><button class="btn kb-key">p<span>0</span></button></div>
      <div class="d-flex justify-content-center"><button class="btn kb-key">a<span>@</span></button><button class="btn kb-key">s<span>*</span></button><button class="btn kb-key">d<span>+</span></button><button class="btn kb-key">f<span>-</span></button><button class="btn kb-key">g<span>=</span></button><button class="btn kb-key">h<span>/</span></button><button class="btn kb-key">j<span>#</span></button><button class="btn kb-key">k<span>(</span></button><button class="btn kb-key">l<span>)</span></button></div>
      <div class="d-flex justify-content-center"><button class="btn kb-key k-c k-wide k-alt" aria-label="Shift"><svg><use href="#shift"/></svg></button><button class="btn kb-key">z<span>'</span></button><button class="btn kb-key">x<span>:</span></button><button class="btn kb-key">c<span>"</span></button><button class="btn kb-key">v<span>?</span></button><button class="btn kb-key">b<span>!</span></button><button class="btn kb-key">n<span>~</span></button><button class="btn kb-key">m<span>\</span></button><button class="btn kb-key k-c k-wide k-alt" aria-label="退格"><svg><use href="#bksp"/></svg></button></div>
      <div class="d-flex justify-content-center"><button class="btn kb-key k-c k-wide k-alt k-fn">?123</button><button class="btn kb-key k-c k-alt k-pn">,</button><button class="btn kb-key k-c" aria-label="切换"><svg><use href="#globe"/></svg></button><button class="btn kb-key k-c k-space" aria-label="空格"></button><button class="btn kb-key k-c k-alt k-pn">.</button><button class="btn kb-key k-c k-wide k-go" aria-label="回车"><svg><use href="#enter"/></svg></button></div>
  </div></div>
  <div class="config d-flex align-items-center justify-content-between"><span>配置主题</span><button class="btn" aria-label="设置"><svg class="i50" color="#616161"><use href="#gear"/></svg></button></div>
  </header>
  <div class="themes">
    <button class="btn theme"><svg class="art" viewBox="0 0 267 192" preserveAspectRatio="none"><path fill="#074f7d" d="M0 0h267v192H0z"/><path fill="#0994a6" d="M0 0h172L0 171z"/><path fill="#c13707" d="M0 171L67 105l87 87H0z"/><path fill="#d6a818" d="M67 105L81 92l100 100h-27z"/><path fill="#00263f" d="M220 0h47v47z"/><path fill="#347dac" d="M267 65v106l-54-53z"/></svg><span class="new"><svg width="30" height="30"><path d="M13 0h4v13h13v4H17v13h-4V17H0v-4h13z"/></svg>新增主题</span></button>
    <button class="btn theme th-aqua" aria-label="主题 1"><i class="t-head"></i><span class="t-foot d-flex align-items-center justify-content-between"><i class="t-bar"></i><i class="t-dot"></i></span></button>
    <button class="btn theme th-deep" aria-label="主题 2"><i class="t-head"></i><span class="t-foot d-flex align-items-center justify-content-between"><i class="t-bar"></i><i class="t-dot"></i></span></button>
    <button class="btn theme th-light" aria-label="主题 3"><i class="t-head"></i><span class="t-foot d-flex align-items-center justify-content-between"><i class="t-bar"></i><i class="t-dot"></i></span></button>
    <button class="btn theme th-dark" aria-label="主题 4"><i class="t-head"></i><span class="t-foot d-flex align-items-center justify-content-between"><i class="t-bar"></i><i class="t-dot"></i></span></button>
    <button class="btn theme th-nord" aria-label="主题 5"><i class="t-head"></i><svg class="tick" viewBox="0 0 24 24"><path d="M9 16.170L4.830 12l-1.420 1.410L9 19 21 7l-1.410-1.410z"/></svg><span class="t-foot d-flex align-items-center justify-content-between"><i class="t-bar"></i><i class="t-dot"></i></span></button>
    <button class="btn theme th-nordk" aria-label="主题 6"><i class="t-head"></i><span class="t-foot d-flex align-items-center justify-content-between"><i class="t-bar"></i><i class="t-dot"></i></span></button>
    <button class="btn theme th-blue" aria-label="主题 7"><i class="t-head"></i><span class="t-foot d-flex align-items-center justify-content-between"><i class="t-bar"></i><i class="t-dot"></i></span></button>
  </div>
  <div class="homebar"></div>
</section>

<!-- settings list -->
<section class="screen flat gap-l position-relative d-flex flex-column">
  <header class="appbar">
  <div class="status d-flex align-items-center"><span>20:47:37</span><svg class="clockdot" width="14" height="18"><use href="#zero"/></svg>
    <div class="stat-icons d-flex align-items-center ms-auto"><svg width="27" height="28"><use href="#alarm"/></svg><svg width="24" height="28"><use href="#vib"/></svg><svg width="22" height="28"><use href="#bt"/></svg><div class="rate">0.09<span>KB/S</span></div>
    <div class="volte"><div class="d-flex justify-content-between"><span>Vo</span><svg width="6" height="8"><use href="#wave"/></svg><span>1</span></div><div class="d-flex justify-content-between"><span>LTE</span><span>2</span></div></div>
    <div class="sig sig5 d-flex">5G<svg class="tri" width="23" height="23"><use href="#tri"/></svg></div><div class="sig sig4 d-flex"><svg width="7" height="12" color="#ccc"><use href="#updn"/></svg>4G<svg class="tri" width="23" height="23"><use href="#tri"/></svg></div><span class="pct">49%</span></div></div>
  <div class="appbar-row d-flex align-items-center"><button class="btn" aria-label="返回"><svg class="i50"><use href="#back"/></svg></button><h1 class="app-title">小企鹅输入法5</h1><button class="btn" aria-label="更多"><svg class="i50"><use href="#vdots"/></svg></button></div>
  </header>
  <div class="prefs flex-grow-1">
    <h2 class="group">Fcitx</h2>
    <a href="#" class="pref d-flex align-items-center"><svg class="i50"><use href="#tune"/></svg><span>全局选项</span></a>
    <a href="#" class="pref d-flex align-items-center"><svg class="i50"><use href="#globe"/></svg><span>输入法</span></a>
    <a href="#" class="pref d-flex align-items-center"><svg class="i50"><use href="#ext"/></svg><span>附加组件</span></a>
    <div class="rule"></div>
    <h2 class="group">Android</h2>
    <a href="#" class="pref d-flex align-items-center"><svg class="i50"><use href="#keyb"/></svg><span>键盘</span></a>
    <a href="#" class="pref d-flex align-items-center"><svg class="i50"><use href="#pal"/></svg><span>主题</span></a>
    <a href="#" class="pref d-flex align-items-center"><svg class="i50"><use href="#clip"/></svg><span>剪贴板</span></a>
    <a href="#" class="pref d-flex align-items-center"><svg class="i50"><use href="#droid"/></svg><span>插件</span></a>
    <a href="#" class="pref d-flex align-items-center"><svg class="i50"><use href="#hdots"/></svg><span>高级</span></a>
  </div>
  <div class="homebar"></div>
</section>
</main>
</body>
</html>
